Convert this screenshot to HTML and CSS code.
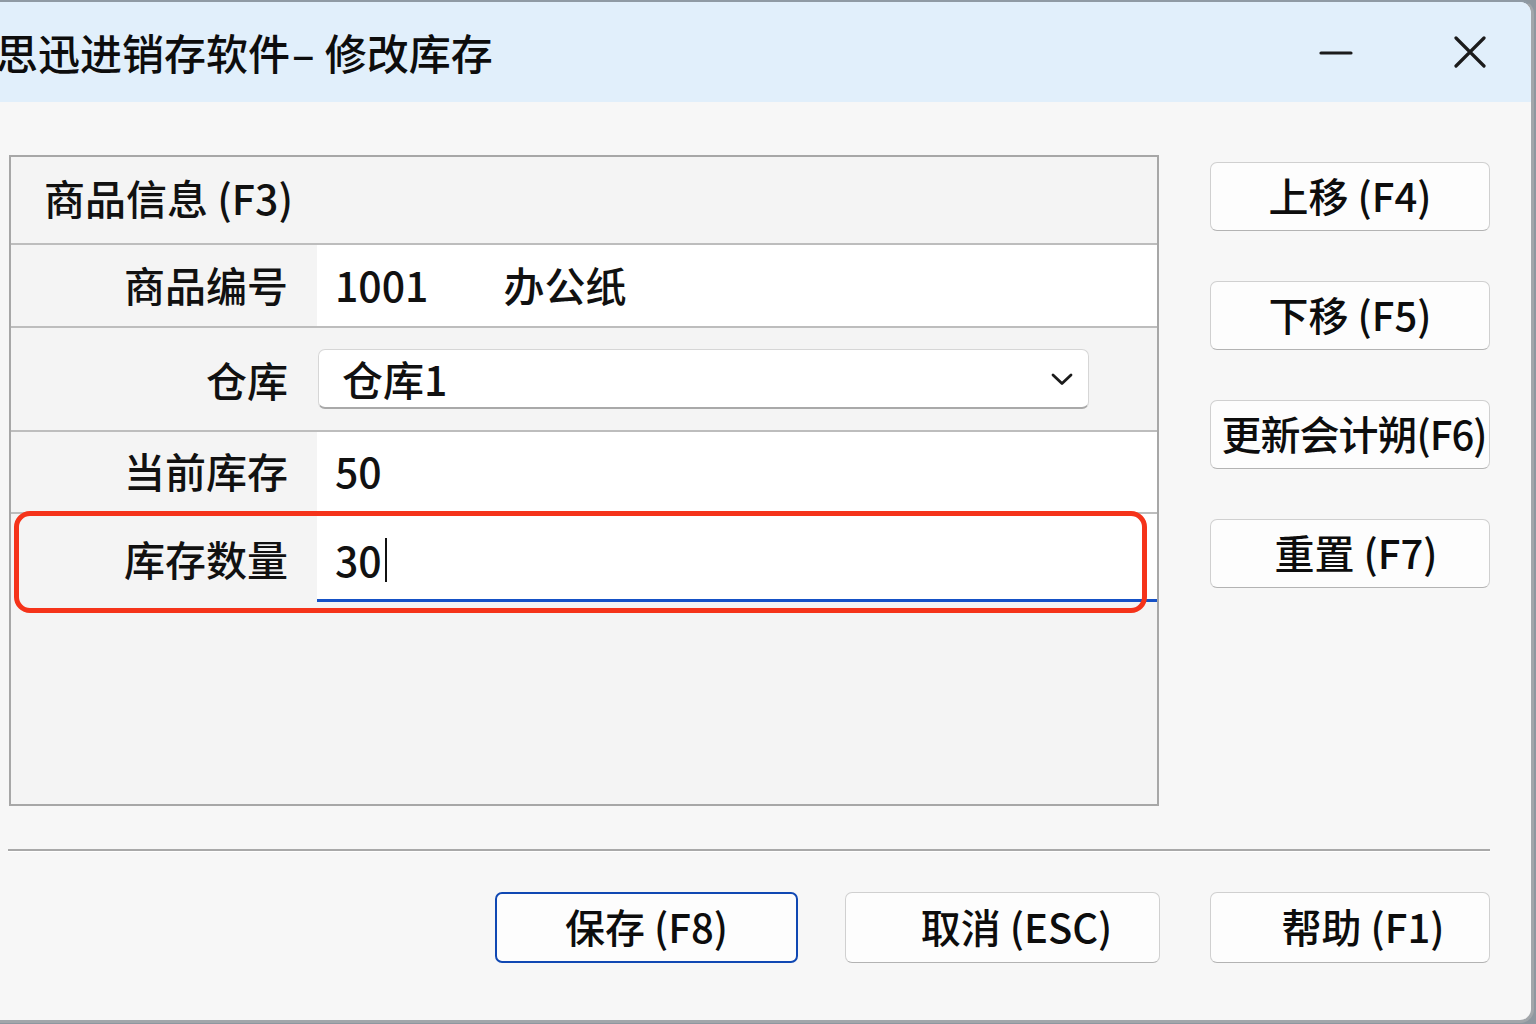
FILE: index.html
```html
<!DOCTYPE html>
<html lang="zh-CN">
<head>
<meta charset="utf-8">
<title>思迅进销存软件 – 修改库存</title>
<link rel="stylesheet" href="styles.css">
</head>
<body>
<div class="window">
  <div class="titlebar">
    <div class="title">思迅进销存软件<span class="dash">–</span>修改库存</div>
    <div class="caption">
      <svg class="cap-min" width="34" height="6" viewBox="0 0 34 6"><line x1="2" y1="3" x2="32" y2="3" stroke="#1b1b1b" stroke-width="3.2" stroke-linecap="round"/></svg>
      <svg class="cap-close" width="34" height="32" viewBox="0 0 34 32"><path d="M3 2 L31 30 M31 2 L3 30" stroke="#1b1b1b" stroke-width="3.2" stroke-linecap="round" fill="none"/></svg>
    </div>
  </div>
  <div class="client">
    <div class="main">
      <div class="group">
        <div class="group-head">商品信息 (F3)</div>
        <div class="row r1">
          <div class="label">商品编号</div>
          <div class="field white">1001<span class="name">办公纸</span></div>
        </div>
        <div class="row r2">
          <div class="label">仓库</div>
          <div class="field">
            <div class="combo">
              <span>仓库1</span>
              <svg width="22" height="13" viewBox="0 0 22 13"><path d="M2 2 L11 10.5 L20 2" stroke="#1b1b1b" stroke-width="2.8" fill="none" stroke-linecap="round" stroke-linejoin="round"/></svg>
            </div>
          </div>
        </div>
        <div class="row r3">
          <div class="label">当前库存</div>
          <div class="field white">50</div>
        </div>
        <div class="row r4">
          <div class="label">库存数量</div>
          <div class="field white focus">30<span class="caret"></span></div>
        </div>
        <div class="group-fill"></div>
      </div>
      <div class="side">
        <div class="btn side-btn">上移 (F4)</div>
        <div class="btn side-btn">下移 (F5)</div>
        <div class="btn side-btn tight">更新会计朔(F6)</div>
        <div class="btn side-btn shift">重置 (F7)</div>
      </div>
    </div>
    <div class="sep"></div>
    <div class="footer">
      <div class="btn btn-save">保存 (F8)</div>
      <div class="btn btn-cancel">取消 (ESC)</div>
      <div class="btn btn-help">帮助 (F1)</div>
    </div>
  </div>
  <div class="mark"></div>
</div>
</body>
</html>
```

FILE: styles.css
```css
* { box-sizing: border-box; }

html, body {
  margin: 0;
  padding: 0;
}

body {
  width: 1536px;
  height: 1024px;
  background: #8e979f;
  font-family: "Noto Sans CJK SC", "Noto Sans", sans-serif;
  font-weight: 500;
  color: #111;
  overflow: hidden;
}

.window {
  position: relative;
  width: 1534px;
  height: 1023px;
  background: #f7f7f7;
  border-top: 2px solid #8f9aa4;
  border-right: 3px solid #a2a6aa;
  border-bottom: 3px solid #a2a6aa;
  border-radius: 0 14px 14px 0;
  overflow: hidden;
  display: flex;
  flex-direction: column;
}

.titlebar {
  height: 100px;
  background: #e1effb;
  display: flex;
  align-items: center;
  justify-content: space-between;
}

.title {
  margin-left: -4px;
  font-size: 42px;
  line-height: 1;
  white-space: nowrap;
  color: #0d0d0d;
}

.dash {
  margin-left: 2px;
  margin-right: 10px;
}

.caption {
  display: flex;
  align-items: center;
  gap: 100px;
  padding-right: 44px;
}

.cap-min { display: block; margin-top: 2px; }
.cap-close { display: block; }

.client {
  flex: 1;
  display: flex;
  flex-direction: column;
}

.main {
  display: flex;
  align-items: flex-start;
  padding-top: 53px;
  padding-left: 9px;
}

.group {
  width: 1150px;
  height: 651px;
  border: 2px solid #a7a7a7;
  background: #f4f4f4;
  display: flex;
  flex-direction: column;
}

.group-head {
  height: 88px;
  border-bottom: 2px solid #bdbdbd;
  display: flex;
  align-items: center;
  padding-left: 33px;
  padding-bottom: 6px;
  font-size: 41px;
  line-height: 1;
}

.row {
  display: flex;
  border-bottom: 2px solid #bdbdbd;
}

.r1 { height: 83px; }
.r2 { height: 104px; }
.r3 { height: 82px; }
.r4 { height: 88px; border-bottom: none; }

.label {
  width: 306px;
  flex: none;
  display: flex;
  align-items: center;
  justify-content: flex-end;
  padding-right: 29px;
  font-size: 41px;
  line-height: 1;
}

.r1 .label, .r1 .field { padding-bottom: 2px; }
.r3 .label, .r3 .field { padding-bottom: 4px; }

.field {
  flex: 1;
  display: flex;
  align-items: center;
  padding-left: 18px;
  font-size: 41px;
  line-height: 1;
}

.field.white { background: #ffffff; }

.field.focus {
  border-bottom: 3px solid #1551c6;
  padding-top: 6px;
}

.name { margin-left: 75px; }

.caret {
  display: inline-block;
  width: 2px;
  height: 44px;
  background: #111;
  margin-left: 3px;
}

.r2 .field { padding-left: 1px; }

.combo {
  width: 771px;
  height: 60px;
  background: #ffffff;
  border: 1px solid #d6d6d6;
  border-bottom: 2px solid #a9a9a9;
  border-radius: 7px;
  display: flex;
  align-items: center;
  justify-content: space-between;
  padding-left: 23px;
  padding-right: 15px;
}

.combo svg { display: block; margin-top: 1px; }

.group-fill { flex: 1; }

.side {
  margin-left: 51px;
  padding-top: 7px;
  display: flex;
  flex-direction: column;
  gap: 50px;
}

.btn {
  background: #fdfdfd;
  border: 1px solid #d0d0d0;
  border-bottom-color: #b3b3b3;
  border-radius: 7px;
  display: flex;
  align-items: center;
  justify-content: center;
  font-size: 40px;
  line-height: 1;
  white-space: nowrap;
  color: #0d0d0d;
  padding-bottom: 3px;
}

.side-btn {
  width: 280px;
  height: 69px;
}

.side-btn.tight {
  padding-left: 8px;
  letter-spacing: -1px;
}

.side-btn.shift { padding-left: 12px; }

.sep {
  margin-top: 43px;
  margin-left: 8px;
  width: 1482px;
  height: 3px;
  border-top: 2px solid #a9a9a9;
  border-bottom: 1px solid #ffffff;
}

.footer {
  margin-top: 40px;
  display: flex;
  justify-content: flex-end;
  padding-right: 41px;
}

.footer .btn { height: 71px; }

.btn-save {
  width: 303px;
  border: 2px solid #1048b3;
}

.btn-cancel {
  width: 315px;
  margin-left: 47px;
  padding-left: 28px;
}

.btn-help {
  width: 280px;
  margin-left: 50px;
  padding-left: 26px;
}

.mark {
  position: absolute;
  left: 14px;
  top: 509px;
  width: 1133px;
  height: 102px;
  border: 5px solid #f5331a;
  border-radius: 16px;
  pointer-events: none;
}
```
